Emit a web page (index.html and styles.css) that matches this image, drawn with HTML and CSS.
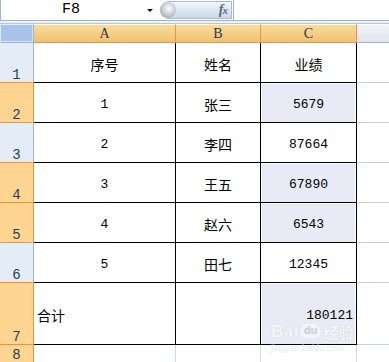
FILE: index.html
```html
<!DOCTYPE html>
<html lang="zh">
<head>
<meta charset="utf-8">
<title>Sheet</title>
<link rel="stylesheet" href="styles.css">
</head>
<body>
<div class="app">
  <div class="fbar">
    <div class="namebox"><span class="ref">F8</span><span class="arrow"></span></div>
    <div class="fxbtn"><span class="knob"></span><span class="fx"><i>f</i><i class="x">x</i></span></div>
    <div class="finput"></div>
  </div>
  <div class="strip"></div>
  <div class="sheet">
    <div class="corner"></div>
    <div class="ch sel">A</div>
    <div class="ch sel">B</div>
    <div class="ch sel">C</div>
    <div class="ch last"></div>

    <div class="rh">1</div>
    <div class="c cn">序号</div>
    <div class="c cn">姓名</div>
    <div class="c cn">业绩</div>
    <div class="d"></div>

    <div class="rh sel">2</div>
    <div class="c num">1</div>
    <div class="c cn">张三</div>
    <div class="c num hl">5679</div>
    <div class="d"></div>

    <div class="rh">3</div>
    <div class="c num">2</div>
    <div class="c cn">李四</div>
    <div class="c num">87664</div>
    <div class="d"></div>

    <div class="rh sel">4</div>
    <div class="c num">3</div>
    <div class="c cn">王五</div>
    <div class="c num hl">67890</div>
    <div class="d"></div>

    <div class="rh sel">5</div>
    <div class="c num">4</div>
    <div class="c cn">赵六</div>
    <div class="c num hl">6543</div>
    <div class="d"></div>

    <div class="rh">6</div>
    <div class="c num">5</div>
    <div class="c cn">田七</div>
    <div class="c num">12345</div>
    <div class="d"></div>

    <div class="rh sel">7</div>
    <div class="c cn left">合计</div>
    <div class="c"></div>
    <div class="c num right hl">180121</div>
    <div class="d"></div>

    <div class="rh sel">8</div>
    <div class="e"></div>
    <div class="e"></div>
    <div class="e"></div>
    <div class="e last"></div>
  </div>
  <div class="wm">
    <div class="wm-logo"><span class="wm-bai">Bai</span><span class="wm-du">du</span><span class="wm-jy">经验</span></div>
    <div class="wm-url">jingyan.baidu.com</div>
  </div>
</div>
</body>
</html>
```

FILE: styles.css
```css
html, body {
  margin: 0;
  padding: 0;
  background: #ffffff;
}
.app {
  position: relative;
  width: 389px;
  height: 362px;
  overflow: hidden;
  font-family: "Noto Sans CJK SC", sans-serif;
}
.fbar {
  display: flex;
  height: 20px;
  border-bottom: 1px solid #a3b5cc;
  background: #ffffff;
}
.namebox {
  width: 156px;
  border-left: 1px solid #a3b5cc;
  display: flex;
  align-items: center;
  position: relative;
}
.ref {
  width: 140px;
  text-align: center;
  font-family: "Liberation Mono", "Courier New", monospace;
  font-size: 15px;
  color: #000;
  line-height: 20px;
}
.arrow {
  margin-left: 6px;
  width: 0;
  height: 0;
  border-left: 3px solid transparent;
  border-right: 3px solid transparent;
  border-top: 3px solid #111;
}
.fxbtn {
  margin-left: 3px;
  width: 72px;
  height: 18px;
  margin-top: 1px;
  border: 1px solid #a9bbd3;
  border-left: none;
  border-radius: 9px 0 0 9px;
  background: linear-gradient(#f4f7fc, #dde6f3 50%, #c9d7ea);
  display: flex;
  align-items: center;
  justify-content: space-between;
  box-sizing: border-box;
}
.knob {
  width: 16px;
  height: 16px;
  border-radius: 50%;
  background: radial-gradient(circle at 55% 40%, #fafbfd 0, #d7dbe2 35%, #a9b1bd 75%, #c9d3e2 100%);
}
.fx {
  font-family: "Liberation Serif", serif;
  font-style: italic;
  font-weight: bold;
  color: #5a6b82;
  font-size: 14px;
  margin-right: 4px;
  letter-spacing: -1px;
}
.fx i { font-style: italic; }
.fx .x { font-size: 11px; }
.finput {
  flex: 1;
  margin-left: 1px;
  border-left: 1px solid #a3b5cc;
  background: #fff;
}
.strip {
  height: 2px;
  background: #eef2f8;
  border-bottom: 1px solid #b8c6da;
}
.sheet {
  display: grid;
  grid-template-columns: 34px 142px 85px 96px 1fr;
  grid-template-rows: 19px 40px 40px 40px 40px 40px 40px 62px 18px;
}
.sheet > div { box-sizing: border-box; }
.corner {
  background: #a9c4ea;
  border-top: 1px solid #e2eaf6;
  border-left: 1px solid #dce6f4;
  border-right: 1px solid #9eb6ce;
  border-bottom: 1px solid #9eb6ce;
  box-shadow: inset -1px -1px 0 #d3e0f2;
}
.ch {
  border-top: 1px solid #ffffff;
  border-bottom: 1px solid #9eb6ce;
  border-right: 1px solid #b7c6db;
  background: linear-gradient(#f0f3f8, #dfe5ee);
  font-family: "Liberation Serif", serif;
  font-size: 14px;
  color: #243b57;
  text-align: center;
  line-height: 17px;
}
.ch.sel {
  background: linear-gradient(#f9dc9f, #f2c16e);
  border-bottom-color: #f29436;
  border-right-color: #f29436;
}
.ch.last { border-right: none; }
.rh {
  background: #e4ecf7;
  border-right: 1px solid #9eb6ce;
  border-bottom: 1px solid #f29436;
  font-family: "Liberation Mono", "Courier New", monospace;
  font-size: 14px;
  color: #27405e;
  display: flex;
  align-items: flex-end;
  justify-content: center;
  line-height: 12px;
  padding-bottom: 1px;
}
.rh.sel {
  background: #ffd591;
  border-right-color: #f29436;
}
.c {
  border-right: 1px solid #000;
  border-bottom: 1px solid #000;
  display: flex;
  align-items: center;
  justify-content: center;
  color: #000;
  background: #fff;
}
.cn {
  font-size: 14px;
  padding-top: 2px;
}
.num {
  font-family: "Liberation Mono", "Courier New", monospace;
  font-size: 13px;
  line-height: 13px;
  padding-top: 3px;
}
.left { justify-content: flex-start; padding-left: 3px; }
.right { justify-content: flex-end; padding-right: 3px; }
.hl {
  background: #e8ebf5;
  box-shadow: inset 1px 1px 0 #fff, inset -1px 0 0 #fff;
}
.d {
  border-bottom: 1px solid #c6d3e6;
}
.e {
  border-right: 1px solid #d0d9e6;
}
.e.last { border-right: none; }
.wm {
  position: absolute;
  left: 271px;
  top: 323px;
  width: 92px;
  color: rgba(255, 255, 255, 0.85);
  text-shadow: 0 0 1px rgba(120, 130, 150, 0.35);
  pointer-events: none;
  line-height: 1;
}
.wm-logo {
  display: flex;
  align-items: center;
  height: 16px;
}
.wm-bai {
  font-family: "Liberation Sans", sans-serif;
  font-weight: bold;
  font-size: 17px;
  letter-spacing: 0.5px;
}
.wm-du {
  font-family: "Liberation Sans", sans-serif;
  font-weight: bold;
  font-size: 11px;
  margin-left: 2px;
  padding: 1px 3px 2px;
  border-radius: 7px 7px 5px 5px;
  background: rgba(255, 255, 255, 0.55);
  color: rgba(200, 205, 215, 0.6);
}
.wm-jy {
  font-family: "Noto Sans CJK SC", sans-serif;
  font-weight: bold;
  font-size: 15px;
  margin-left: 3px;
}
.wm-url {
  font-family: "Liberation Sans", sans-serif;
  font-size: 9px;
  margin-top: 5px;
  color: rgba(225, 230, 238, 0.9);
  text-shadow: none;
}
```
